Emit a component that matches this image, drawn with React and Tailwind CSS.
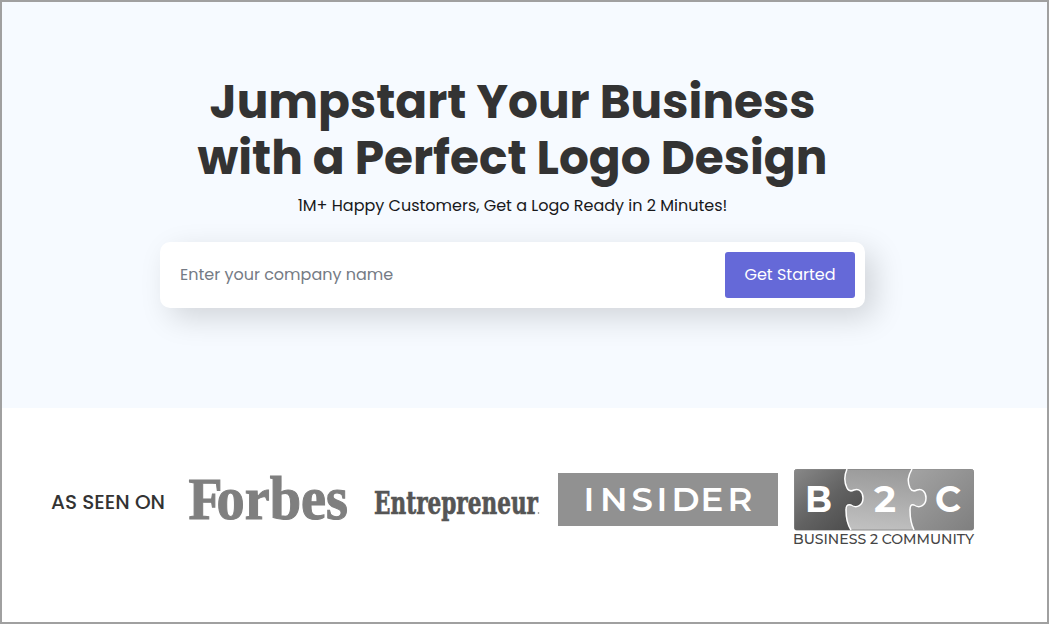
const ForbesLogo = () => (
    <svg width="162" height="76" viewBox="0 0 162 76" className="block overflow-visible" role="img" aria-label="Forbes">
        <g fill="#7f7f7f" stroke="#7f7f7f" strokeWidth="1.1" fontFamily="'Liberation Serif', serif" fontWeight="700">
            <text y="62">
                <tspan x="1.500" fontSize="60" textLength="34" lengthAdjust="spacingAndGlyphs">F</tspan>
                <tspan x="29.500" fontSize="61" textLength="131.500" lengthAdjust="spacingAndGlyphs">orbes</tspan>
            </text>
        </g>
    </svg>
);

const EntrepreneurLogo = () => (
    <svg width="168" height="50" viewBox="0 0 168 50" className="block overflow-visible" role="img" aria-label="Entrepreneur">
        <text x="1" y="36.500" textLength="164" lengthAdjust="spacingAndGlyphs" fill="#555555" stroke="#555555" strokeWidth="0.7" fontFamily="'DejaVu Serif', serif" fontWeight="700" fontSize="32">Entrepreneur</text>
        <circle cx="165.500" cy="36" r="0.8" fill="#777777" />
    </svg>
);

const InsiderLogo = () => (
    <svg width="220" height="53" viewBox="0 0 220 53" className="block" role="img" aria-label="Insider">
        <rect width="220" height="53" fill="#919191" />
        <text x="25.500 42 73.500 98.500 113.500 142.500 169.500" y="38" fill="#ffffff" fontFamily="Montserrat, Poppins, sans-serif" fontWeight="600" fontSize="34">INSIDER</text>
    </svg>
);

const B2CLogo = () => (
    <svg width="182" height="84" viewBox="0 0 182 84" className="block" role="img" aria-label="Business 2 Community">
        <defs>
            <linearGradient id="dark" x1="0" y1="0" x2="1" y2="1">
                <stop offset="0" stopColor="#888888" />
                <stop offset="0.5" stopColor="#626262" />
                <stop offset="1" stopColor="#484848" />
            </linearGradient>
            <linearGradient id="mid" x1="0.3" y1="1" x2="0.6" y2="0">
                <stop offset="0" stopColor="#c2c2c2" />
                <stop offset="1" stopColor="#999999" />
            </linearGradient>
            <linearGradient id="right" x1="0" y1="0" x2="1" y2="1">
                <stop offset="0" stopColor="#a4a4a4" />
                <stop offset="1" stopColor="#7f7f7f" />
            </linearGradient>
        </defs>
        <rect x="1.500" y="2.500" width="179" height="60.500" rx="2" fill="url(#mid)" stroke="#8c8c8c" />
        <path d="M3 2.500H54C51 9 51 15 54 21C56 25 59 24 61 23C66 21 70 25 70 31C70 38 64 42 58 38C54 37 53 39 53 43C53 50 54 57 58 63H3Q1.500 63 1.500 61V4Q1.500 2.500 3 2.500Z" fill="url(#dark)" />
        <path d="M119 2.500C115 9 114 14 117 21C119 25 122 24 124 23C129 21 133 25 133 31C133 38 127 42 121 38C118 37 117 39 117 43C117 50 118 57 121 63H179Q180.500 63 180.500 61V4Q180.500 2.500 179 2.500Z" fill="url(#right)" />
        <path d="M54 2C51 9 51 15 54 21C56 25 59 24 61 23C66 21 70 25 70 31C70 38 64 42 58 38C54 37 53 39 53 43C53 50 54 57 58 63M119 2C115 9 114 14 117 21C119 25 122 24 124 23C129 21 133 25 133 31C133 38 127 42 121 38C118 37 117 39 117 43C117 50 118 57 121 63" fill="none" stroke="#ffffff" strokeWidth="1.500" />
        <g fill="#ffffff" fontFamily="Montserrat, Poppins, sans-serif" fontWeight="700" fontSize="36">
            <text x="12" y="45" textLength="27" lengthAdjust="spacingAndGlyphs">B</text>
            <text x="81" y="45" textLength="22" lengthAdjust="spacingAndGlyphs">2</text>
            <text x="142" y="45" textLength="26" lengthAdjust="spacingAndGlyphs">C</text>
        </g>
        <text x="0" y="77" textLength="181" lengthAdjust="spacingAndGlyphs" fill="#454545" fontFamily="Montserrat, Poppins, sans-serif" fontWeight="500" fontSize="14">BUSINESS 2 COMMUNITY</text>
    </svg>
);

const Hero = () => {
    return (
        <section className="h-[406px] bg-[#f6faff] pt-[72px] pr-6 flex flex-col items-center">
            <h1 className="text-center text-[47px] leading-14 font-bold text-[#333333] whitespace-nowrap">
                <span className="block">Jumpstart Your Business</span>
                <span className="block">with a Perfect Logo Design</span>
            </h1>
            <p className="mt-2 text-base leading-6 text-[#18181b]">
                1M+ Happy Customers, Get a Logo Ready in 2 Minutes!
            </p>

            <form className="mt-6 flex h-[66px] w-[705px] items-center rounded-[10px] bg-white p-2.5 shadow-[10px_10px_30px_rgba(0,0,0,0.15)]">
                <input
                    type="text"
                    placeholder="Enter your company name"
                    className="min-w-0 flex-1 bg-transparent pl-2.5 text-base outline-none placeholder:text-[#757b85]"
                />
                <button type="button" className="h-[46px] w-[130px] rounded-[3px] bg-[#6569d8] text-base text-white">
                    Get Started
                </button>
            </form>
        </section>
    );
};

const AsSeenOn = () => {
    return (
        <section className="flex items-start pt-[49px] pl-[49px]">
            <p className="mt-[30px] w-[136px] text-xl leading-[30px] font-medium whitespace-nowrap text-[#333333]">AS SEEN ON</p>
            <div><ForbesLogo /></div>
            <div className="mt-5 ml-6"><EntrepreneurLogo /></div>
            <div className="mt-4 ml-[17px]"><InsiderLogo /></div>
            <div className="mt-2.5 ml-[15px]"><B2CLogo /></div>
        </section>
    );
};

export default function App() {
    return (
        <main className="h-[624px] w-[1049px] overflow-hidden border-2 border-[#a0a0a0] bg-white font-[Poppins,Inter,sans-serif]">
            <Hero />
            <AsSeenOn />
        </main>
    );
}
